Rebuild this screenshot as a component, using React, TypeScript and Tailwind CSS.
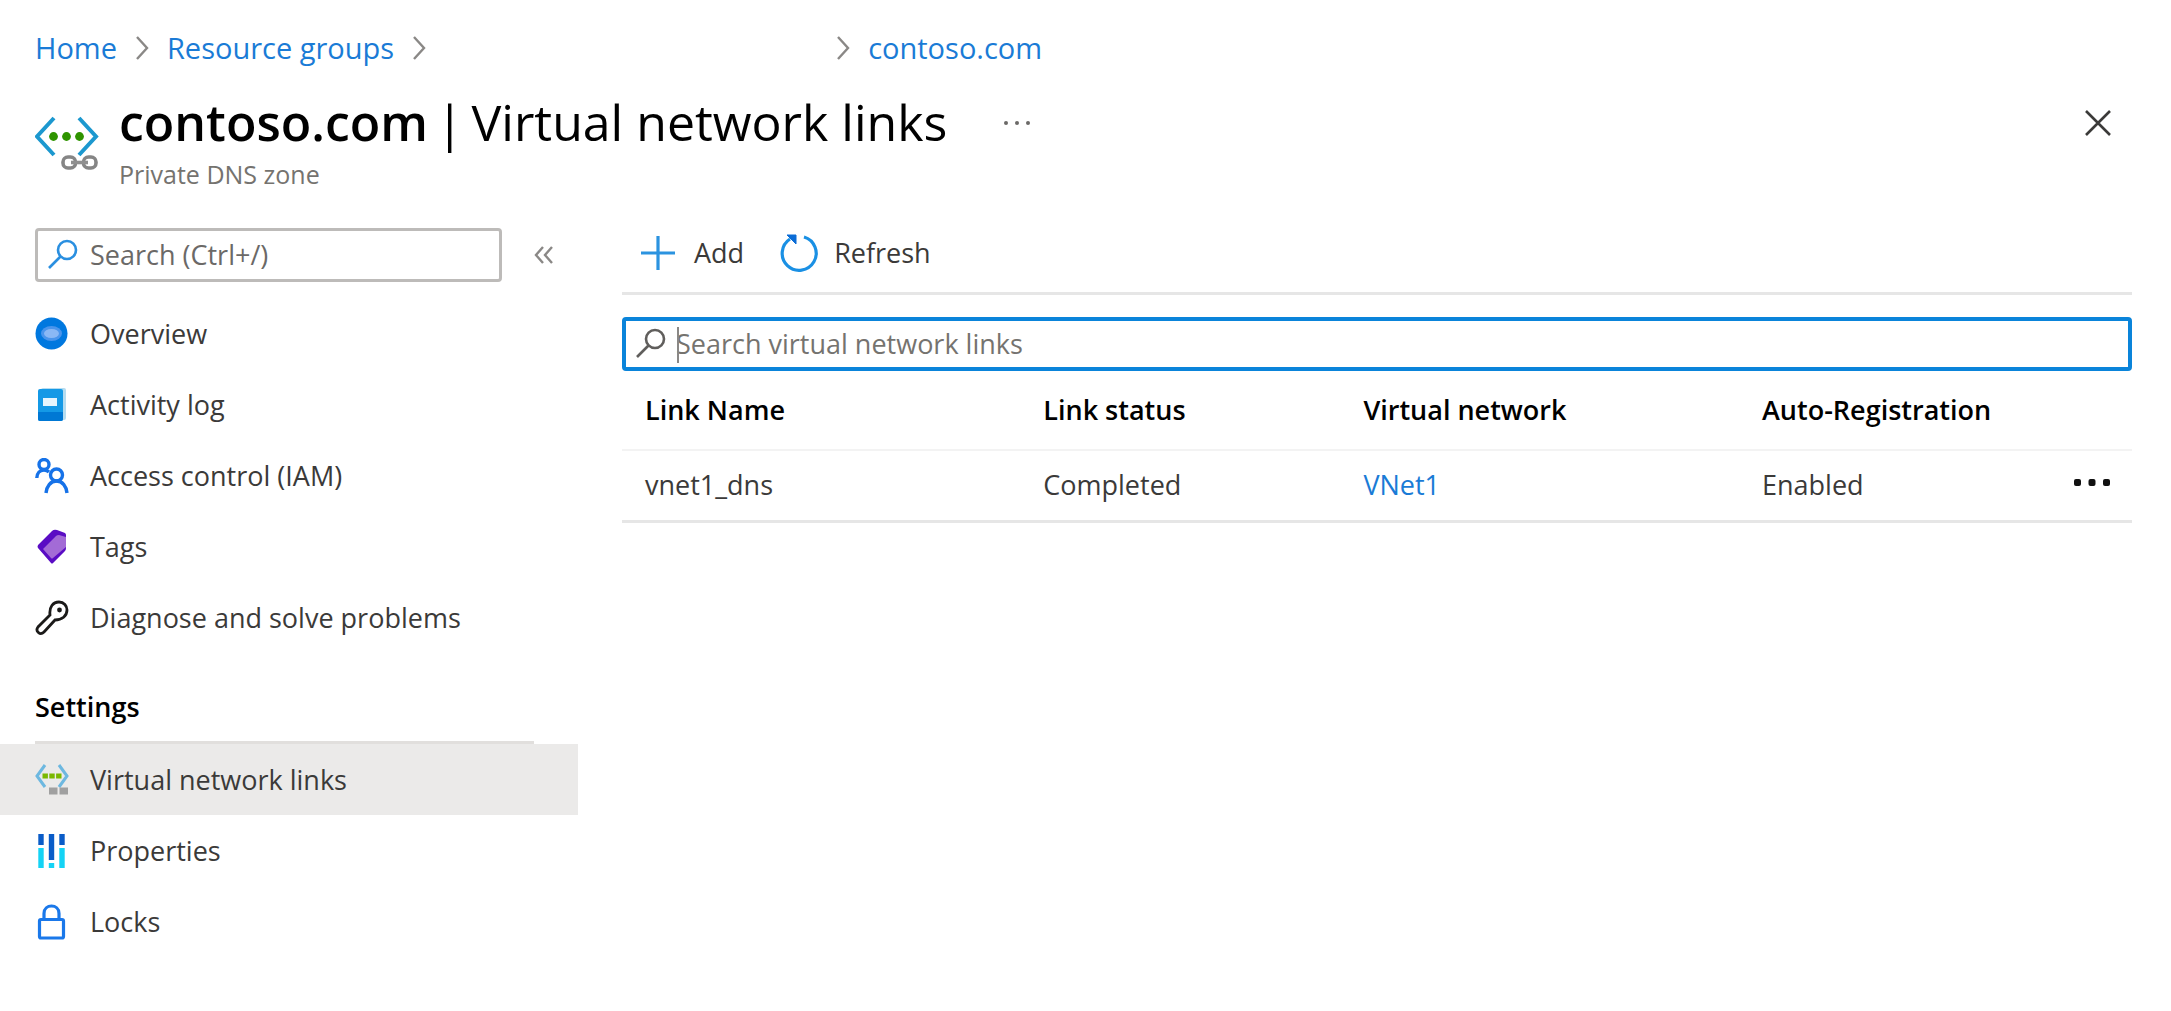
import type { ReactNode } from "react";

function Chevron() {
  return (
    <svg aria-hidden="true" viewBox="0 0 14 24" className="h-6 w-[14px] shrink-0" fill="none" stroke="#8a8886" strokeWidth="2.4">
      <path d="M2 1 12 12 2 23" />
    </svg>
  );
}

function Magnifier({ color }: { color: string }) {
  return (
    <svg aria-hidden="true" viewBox="0 0 32 32" className="size-8 shrink-0" fill="none" stroke={color} strokeWidth="2.6">
      <circle cx="19" cy="11" r="9" />
      <path d="M12.500 17.500 1 29" />
    </svg>
  );
}

function VnetLinkIcon() {
  return (
    <svg aria-hidden="true" viewBox="0 0 64 56" className="h-14 w-16 shrink-0" fill="none">
      <path d="M19 2 2 20.500 19 39M44 2 61 20.500 44 39" stroke="#1c98cf" strokeWidth="4" />
      <circle cx="18.500" cy="20.500" r="4.400" fill="#2f9400" />
      <circle cx="31.500" cy="20.500" r="4.400" fill="#2f9400" />
      <circle cx="44.500" cy="20.500" r="4.400" fill="#2f9400" />
      <rect x="28" y="41" width="12.500" height="11" rx="5" stroke="#858585" strokeWidth="3.6" />
      <rect x="48.500" y="41" width="12.500" height="11" rx="5" stroke="#858585" strokeWidth="3.6" />
      <path d="M36 46.500H53" stroke="#8f8f8f" strokeWidth="3.6" />
    </svg>
  );
}

const icon = "size-9 shrink-0";

function OverviewIcon() {
  return (
    <svg aria-hidden="true" viewBox="0 0 36 36" className={icon}>
      <circle cx="16.500" cy="17.500" r="16" fill="#0078df" />
      <ellipse cx="16.500" cy="17.500" rx="10.500" ry="7.500" fill="#4a95ec" />
      <ellipse cx="16.500" cy="17.500" rx="7.500" ry="4.500" fill="#8ab8f5" />
    </svg>
  );
}

function ActivityIcon() {
  return (
    <svg aria-hidden="true" viewBox="0 0 36 36" className={icon}>
      <rect x="6" y="1" width="25" height="32" rx="2" fill="#b5dcf0" />
      <rect x="3" y="2" width="25" height="32" rx="2" fill="#1499e6" />
      <path d="M3 25H28v7q0 2-2 2H5q-2 0-2-2Z" fill="#0078d4" />
      <rect x="8" y="11" width="14" height="8" fill="#e6f5fd" />
    </svg>
  );
}

function AccessIcon() {
  return (
    <svg aria-hidden="true" viewBox="0 0 36 36" className={icon} fill="none" stroke="#1672e8" strokeWidth="3.4">
      <circle cx="9" cy="6.500" r="5" />
      <path d="M1.800 20C2 15 5 12 9 12c2 0 3.500.5 5 2" />
      <circle cx="21.500" cy="17" r="6" />
      <path d="M11 35c.5-6.500 4.500-12 10.500-12s10 5.500 10.500 12" />
    </svg>
  );
}

function TagsIcon() {
  return (
    <svg aria-hidden="true" viewBox="0 0 36 36" className={icon}>
      <path d="M3 16 17 2q2-2 5-1l8 3q1 1 1 2v13q0 2-1 3L18 34q-1 1-2 0L3 19q-1-1 0-3Z" fill="#5a0cc4" />
      <path d="M8 20 21 7q1-1 3-1l7 2v10L18 29q-1 1-2 0Z" fill="#a36bd6" />
    </svg>
  );
}

function WrenchIcon() {
  return (
    <svg aria-hidden="true" viewBox="0 0 36 36" className={icon} fill="none" stroke="#1b1a19" strokeWidth="2.8">
      <path d="M15 15C14 7 18 2 24 2c5 0 8 4 8 8 0 6-5 10-12 10L9 32c-4 4-9-1-6-5Z" />
      <circle cx="24.500" cy="10" r="2.400" fill="#1b1a19" stroke="none" />
    </svg>
  );
}

function SmallVnetIcon() {
  return (
    <svg aria-hidden="true" viewBox="0 0 36 36" className={icon} fill="none">
      <path d="M10 3 2 14l8 11M24 3l8 11-8 11" stroke="#6db8e0" strokeWidth="3" />
      <path d="M7.500 14H26.500" stroke="#7ab800" strokeWidth="5" strokeDasharray="5.400 1.400" />
      <path d="M14 29H33" stroke="#a0a0a0" strokeWidth="7" strokeDasharray="8.500 2" />
    </svg>
  );
}

function PropertiesIcon() {
  return (
    <svg aria-hidden="true" viewBox="0 0 36 36" className={icon} fill="none" strokeWidth="5.400">
      <path d="M6 1V12M27 1V12M16.500 1V27" stroke="#0a5cc8" />
      <path d="M6 15V35M27 15V35M16.500 30V35" stroke="#14d3f5" />
    </svg>
  );
}

function LockIcon() {
  return (
    <svg aria-hidden="true" viewBox="0 0 36 36" className={icon} fill="none" stroke="#1a78ea" strokeWidth="3.200">
      <rect x="4.500" y="15.500" width="24" height="18.500" rx="1.500" />
      <path d="M9 15V9.500c0-10 15-10 15 0V15" />
    </svg>
  );
}

function NavItem({ icon, label, active }: { icon: ReactNode; label: string; active?: boolean }) {
  return (
    <li>
      <a
        href="#"
        aria-current={active ? "page" : undefined}
        className={`flex h-[71px] items-center gap-[19px] pl-[35px] ${active ? "bg-[#ebeae9]" : ""}`}
      >
        {icon}
        {label}
      </a>
    </li>
  );
}

export default function App() {
  return (
    <div className="min-h-screen bg-white pt-6 pb-10 font-['Open_Sans',sans-serif] text-[27px] leading-9 text-[#3b3a39]">
      <nav aria-label="Breadcrumb" className="flex h-12 items-center pl-[35px] text-[29px] text-[#1a7bd6]">
        <a href="#">Home</a>
        <span className="mx-[18px] flex">
          <Chevron />
        </span>
        <a href="#">Resource groups</a>
        <span className="ml-[18px] flex">
          <Chevron />
        </span>
        <span className="mr-[18px] ml-[410px] flex">
          <Chevron />
        </span>
        <a href="#">contoso.com</a>
      </nav>

      <header className="flex items-start pr-[60px] pl-[35px]">
        <div className="mt-11 mr-5">
          <VnetLinkIcon />
        </div>
        <div className="pt-4">
          <h1 className="flex gap-2 text-[50px] leading-[68px] text-black">
            <span className="font-semibold">contoso.com</span>
            <span>|</span>
            <span>Virtual network links</span>
          </h1>
          <p className="text-[25px] leading-9 text-[#75736f]">Private DNS zone</p>
        </div>
        <button type="button" aria-label="More actions" className="mt-[46px] ml-14">
          <svg aria-hidden="true" viewBox="0 0 28 10" className="h-[10px] w-7" fill="#6b6967">
            <circle cx="3" cy="5" r="2" />
            <circle cx="14" cy="5" r="2" />
            <circle cx="25" cy="5" r="2" />
          </svg>
        </button>
        <button type="button" aria-label="Close" className="mt-[38px] ml-auto">
          <svg aria-hidden="true" viewBox="0 0 26 26" className="size-[26px]" stroke="#3b3a39" strokeWidth="2.6">
            <path d="M1 1 25 25M25 1 1 25" />
          </svg>
        </button>
      </header>

      <div className="flex pt-9 pr-[39px]">
        <aside className="w-[578px] shrink-0">
          <div className="flex items-center pl-[35px]">
            <label className="flex h-[54px] w-[467px] items-center gap-2.5 rounded-[4px] border-3 border-[#bdbbb9] px-2.5">
              <Magnifier color="#2a8fe0" />
              <input
                type="text"
                aria-label="Search menu"
                placeholder="Search (Ctrl+/)"
                className="min-w-0 flex-1 outline-none placeholder:text-[#6b6967]"
              />
            </label>
            <button type="button" aria-label="Collapse menu" className="ml-8">
              <svg aria-hidden="true" viewBox="0 0 20 20" className="size-5" fill="none" stroke="#8a8886" strokeWidth="2.400">
                <path d="M9 2 2 10l7 8M18 2l-7 8 7 8" />
              </svg>
            </button>
          </div>
          <ul className="pt-4">
            <NavItem icon={<OverviewIcon />} label="Overview" />
            <NavItem icon={<ActivityIcon />} label="Activity log" />
            <NavItem icon={<AccessIcon />} label="Access control (IAM)" />
            <NavItem icon={<TagsIcon />} label="Tags" />
            <NavItem icon={<WrenchIcon />} label="Diagnose and solve problems" />
          </ul>
          <h2 className="mt-9 mr-11 ml-[35px] h-[55px] border-b-3 border-[#e1dfdd] font-semibold text-black">Settings</h2>
          <ul>
            <NavItem icon={<SmallVnetIcon />} label="Virtual network links" active />
            <NavItem icon={<PropertiesIcon />} label="Properties" />
            <NavItem icon={<LockIcon />} label="Locks" />
          </ul>
        </aside>

        <main className="ml-11 min-w-0 flex-1">
          <div className="flex h-[67px] items-start gap-9 border-b-3 border-[#e6e6e6] pl-[18px]">
            <button type="button" className="flex h-[50px] items-center gap-[18px]">
              <svg aria-hidden="true" viewBox="0 0 36 36" className="size-9" stroke="#2b93e0" strokeWidth="3.200">
                <path d="M18 1V35M1 18H35" />
              </svg>
              Add
            </button>
            <button type="button" className="flex h-[50px] items-center gap-4">
              <svg aria-hidden="true" viewBox="0 0 38 38" className="size-[38px]" fill="none">
                <path d="M24 3A17 17 0 1 1 10 5" stroke="#1a90e4" strokeWidth="3.200" />
                <path d="M7 1h9v9Z" fill="#0a6cd6" stroke="#0a6cd6" />
              </svg>
              Refresh
            </button>
          </div>

          <label className="relative mt-[22px] flex h-[54px] items-center gap-2 rounded-[4px] border-4 border-[#0a84da] px-2.5">
            <Magnifier color="#605e5c" />
            <span className="absolute top-1.5 left-[51px] h-9 w-0.5 bg-[#8a8886]" />
            <input
              type="text"
              aria-label="Search virtual network links"
              placeholder="Search virtual network links"
              className="min-w-0 flex-1 outline-none placeholder:text-[#75736f]"
            />
          </label>

          <table className="w-full table-fixed text-left">
            <colgroup>
              <col className="w-[27.9%]" />
              <col className="w-[21.2%]" />
              <col className="w-[26.4%]" />
              <col />
            </colgroup>
            <thead>
              <tr className="h-[79px] border-b-2 border-[#f3f3f3] text-black">
                <th scope="col" className="pl-[23px] font-semibold">Link Name</th>
                <th scope="col" className="font-semibold">Link status</th>
                <th scope="col" className="font-semibold">Virtual network</th>
                <th scope="col" className="font-semibold">Auto-Registration</th>
              </tr>
            </thead>
            <tbody>
              <tr className="h-[71px] border-b-3 border-[#e6e6e6]">
                <td className="pl-[23px]">vnet1_dns</td>
                <td>Completed</td>
                <td><a href="#" className="text-[#1a7bd6]">VNet1</a></td>
                <td>
                  <div className="flex items-center justify-between pr-[22px]">
                    Enabled
                    <button type="button" aria-label="Row actions" className="pb-1">
                      <svg aria-hidden="true" viewBox="0 0 36 8" className="h-2 w-9" fill="#111">
                        <rect x="0" y="0" width="7" height="7" rx="2" />
                        <rect x="14.500" y="0" width="7" height="7" rx="2" />
                        <rect x="29" y="0" width="7" height="7" rx="2" />
                      </svg>
                    </button>
                  </div>
                </td>
              </tr>
            </tbody>
          </table>
        </main>
      </div>
    </div>
  );
}
